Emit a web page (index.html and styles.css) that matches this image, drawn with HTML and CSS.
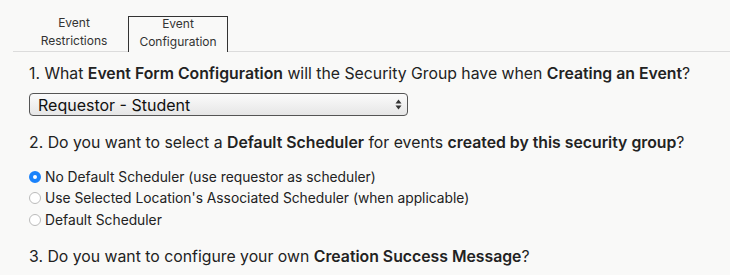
FILE: index.html
```html
<!DOCTYPE html>
<html>
<head>
<meta charset="utf-8">
<link rel="stylesheet" href="styles.css">
</head>
<body>
<div class="tabs">
  <div class="tab"><span class="tab-label">Event<br>Restrictions</span></div>
  <div class="tab active"><span class="tab-label">Event<br>Configuration</span></div>
</div>
<div class="content">
  <p class="q q1">1. What <b>Event Form Configuration</b> will the Security Group have when <b>Creating an Event</b>?</p>
  <div class="select">
    <span>Requestor - Student</span>
    <svg class="arrows" width="7" height="11" viewBox="0 0 7 11"><path d="M3.5 0.5 L6.5 4.5 H0.5 Z M3.5 10.5 L6.5 6.5 H0.5 Z" fill="#333"/></svg>
  </div>
  <p class="q q2">2. Do you want to select a <b>Default Scheduler</b> for events <b>created by this security group</b>?</p>
  <div class="radios">
    <label class="radio"><span class="dot checked"></span>No Default Scheduler (use requestor as scheduler)</label>
    <label class="radio"><span class="dot"></span>Use Selected Location's Associated Scheduler (when applicable)</label>
    <label class="radio"><span class="dot"></span>Default Scheduler</label>
  </div>
  <p class="q q3">3. Do you want to configure your own <b>Creation Success Message</b>?</p>
</div>
</body>
</html>
```
FILE: styles.css
```css
html, body {
  margin: 0;
  padding: 0;
  background: #f9f9f8;
  font-family: Inter, "Open Sans", sans-serif;
  color: #222;
}
.tabs {
  display: flex;
  margin-left: 13px;
  padding-left: 11px;
  padding-top: 15px;
  border-bottom: 1px solid #dcdcdc;
  align-items: flex-end;
}
.tab {
  width: 88px;
  text-align: center;
  font-size: 12px;
  line-height: 17.5px;
  padding: 0 5px 2px;
  color: #333;
  border: 1px solid transparent;
  border-bottom: none;
  margin-right: 4px;
}
.tab-label {
  display: block;
  margin-top: -2px;
}
.tab.active {
  border-color: #333;
  background: #f9f9f8;
  margin-bottom: -1px;
}
.content {
  padding-left: 29px;
}
.q {
  margin: 0;
  font-size: 15.8px;
  line-height: 20px;
  color: #222;
}
.q b { font-weight: 600; }
.q1 { margin-top: 12px; }
.select {
  margin-top: 9px;
  height: 21px;
  border: 1px solid #555;
  border-radius: 4px;
  background: linear-gradient(#fbfbfb, #e6e6e6);
  display: flex;
  align-items: center;
  justify-content: space-between;
  padding: 0 5px 0 8px;
  box-sizing: content-box;
  width: 364px;
  font-size: 16px;
  color: #111;
}
.q2 { margin-top: 17px; }
.radios {
  margin-top: 13px;
  display: flex;
  flex-direction: column;
}
.radio {
  display: flex;
  align-items: center;
  font-size: 13.8px;
  height: 21.5px;
  color: #222;
}
.dot {
  width: 12px;
  height: 12px;
  border-radius: 50%;
  border: 1px solid #bbb;
  background: #fff;
  margin-right: 4px;
  box-sizing: border-box;
}
.dot.checked {
  border: 4px solid #1a82fb;
  background: #fff;
}
.q3 { margin-top: 16px; }
```
